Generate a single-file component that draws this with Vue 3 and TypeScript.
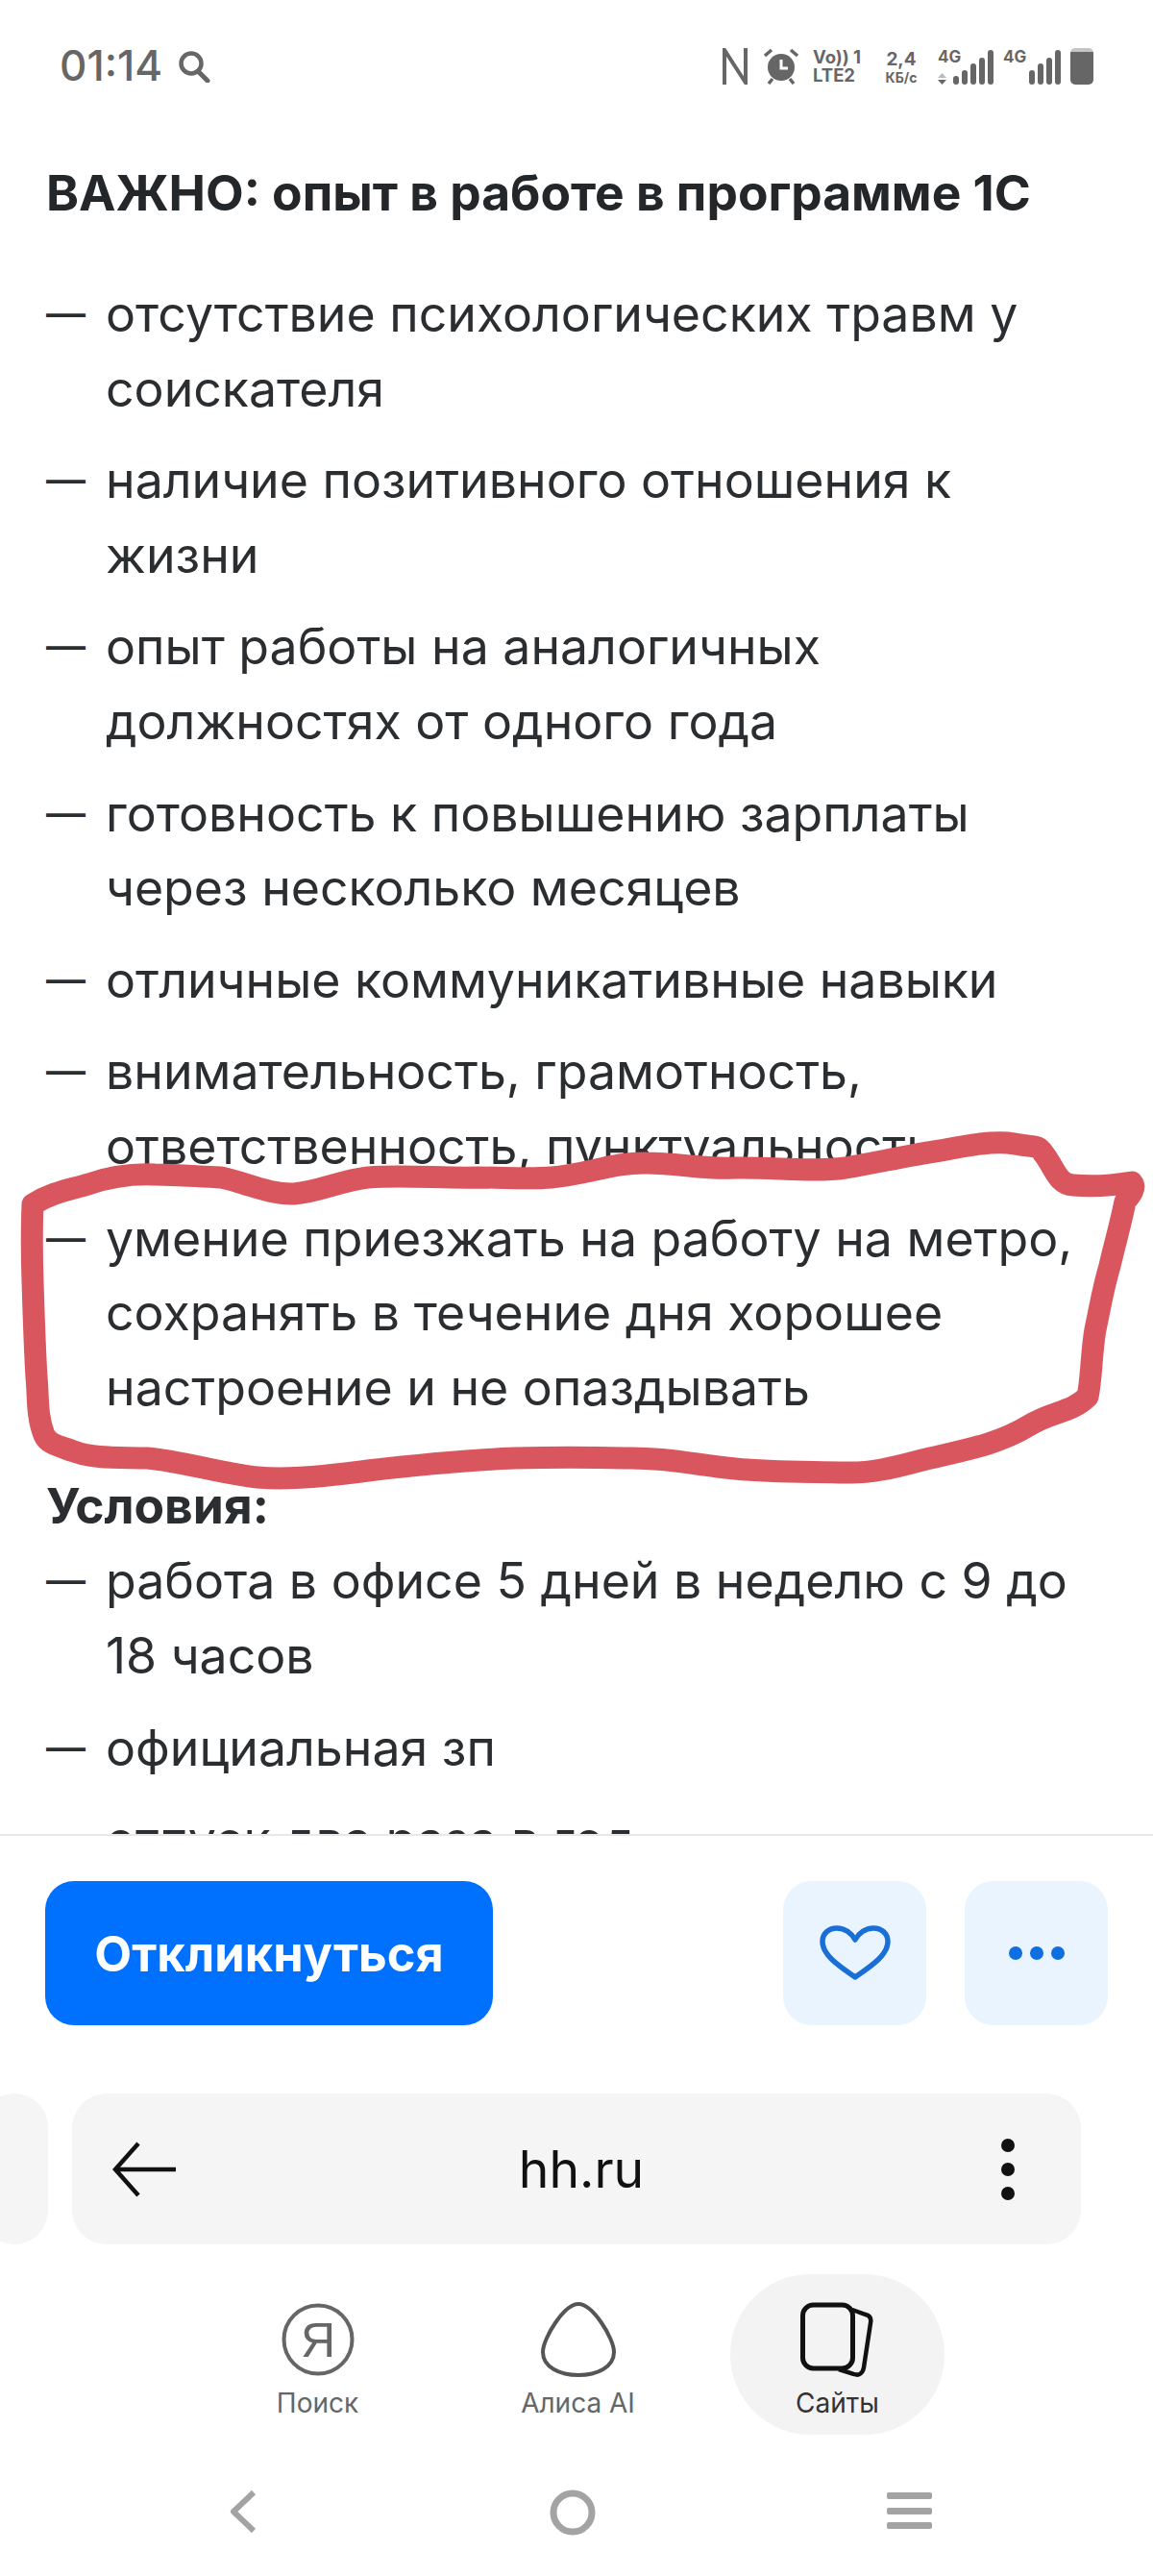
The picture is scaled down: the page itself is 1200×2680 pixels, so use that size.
<script setup lang="ts">
const requirements: string[] = [
  'отсутствие психологических травм у соискателя',
  'наличие позитивного отношения к жизни',
  'опыт работы на аналогичных должностях от одного года',
  'готовность к повышению зарплаты через несколько месяцев',
  'отличные коммуникативные навыки',
  'внимательность, грамотность, ответственность, пунктуальность',
  'умение приезжать на работу на метро, сохранять в течение дня хорошее настроение и не опаздывать',
]
const conditions: string[] = [
  'работа в офисе 5 дней в неделю с 9 до 18 часов',
  'официальная зп',
  'отпуск два раза в год',
]
const bars: number[] = [9, 15, 22, 28, 36]
</script>

<template>
  <div class="phone">
    <div class="status">
      <div class="status-left">
        <span class="time">01:14</span>
        <svg class="search-ic" width="34" height="34" viewBox="0 0 34 34">
          <circle cx="14" cy="14" r="10.5" fill="none" stroke="#666" stroke-width="4.5" />
          <path d="M21 22 L31 32" stroke="#666" stroke-width="5" stroke-linecap="round" />
        </svg>
      </div>
      <div class="status-right">
        <svg width="26" height="38" viewBox="0 0 26 38">
          <path d="M2 38 V2 L24 36 V0" fill="none" stroke="#666" stroke-width="4" />
        </svg>
        <svg class="alarm" width="38" height="38" viewBox="0 0 38 38">
          <circle cx="19" cy="20" r="14" fill="#666" />
          <path d="M19 12 V21 H26" fill="none" stroke="#fff" stroke-width="3" />
          <path d="M2 8 L9 2 M36 8 L29 2 M6 37 L10 32 M32 37 L28 32" stroke="#666" stroke-width="3.5" />
        </svg>
        <div class="stack volte">
          <span>Vo)) 1</span>
          <span>LTE2</span>
        </div>
        <div class="stack speed">
          <span class="speed-num">2,4</span>
          <span class="speed-unit">КБ/с</span>
        </div>
        <div class="signal first">
          <span class="net">4G</span>
          <svg class="updown" width="9" height="12" viewBox="0 0 9 12">
            <path d="M4.5 0 L9 5 H0 Z" fill="#bbb" />
            <path d="M4.5 12 L9 7 H0 Z" fill="#666" />
          </svg>
          <div class="bars">
            <i v-for="h in bars" :key="h" :style="{ height: h + 'px' }"></i>
          </div>
        </div>
        <div class="signal second">
          <span class="net">4G</span>
          <div class="bars">
            <i v-for="h in bars.slice(1)" :key="h" :style="{ height: h + 'px' }"></i>
          </div>
        </div>
        <div class="battery"></div>
      </div>
    </div>

    <div class="content">
      <h2 class="title">ВАЖНО: опыт в работе в программе 1С</h2>
      <ul class="list">
        <li v-for="item in requirements" :key="item"><span class="dash">—</span><span>{{ item }}</span></li>
      </ul>
      <div class="subhead">Условия:</div>
      <ul class="list">
        <li v-for="item in conditions" :key="item"><span class="dash">—</span><span>{{ item }}</span></li>
      </ul>
    </div>

    <div class="actions">
      <button class="respond">Откликнуться</button>
      <div class="action-icons">
        <button class="soft">
          <svg width="76" height="58" viewBox="0 0 76 58">
            <path d="M38 54 C24 44 4 32 4 17 C4 8 11 3 19 3 C27 3 34 8 38 15 C42 8 49 3 57 3 C65 3 72 8 72 17 C72 32 52 44 38 54 Z" fill="none" stroke="#1a6fd6" stroke-width="5.5" stroke-linejoin="round" />
          </svg>
        </button>
        <button class="soft">
          <svg width="58" height="16" viewBox="0 0 58 16">
            <circle cx="7" cy="8" r="7" fill="#0f6fe0" />
            <circle cx="29" cy="8" r="7" fill="#0f6fe0" />
            <circle cx="51" cy="8" r="7" fill="#0f6fe0" />
          </svg>
        </button>
      </div>
    </div>

    <div class="browser">
      <div class="tab-peek"></div>
      <div class="address">
        <svg width="68" height="58" viewBox="0 0 68 58">
          <path d="M27 2 L3 29 L27 56 M3 29 H66" fill="none" stroke="#111" stroke-width="4.5" />
        </svg>
        <span class="host">hh.ru</span>
        <svg width="16" height="66" viewBox="0 0 16 66">
          <circle cx="8" cy="8" r="7" fill="#111" />
          <circle cx="8" cy="33" r="7" fill="#111" />
          <circle cx="8" cy="58" r="7" fill="#111" />
        </svg>
      </div>
    </div>

    <div class="tabs">
      <div class="tab">
        <svg width="78" height="78" viewBox="0 0 78 78">
          <circle cx="39" cy="39" r="35.5" fill="none" stroke="#666" stroke-width="4" />
          <text x="39" y="57" text-anchor="middle" class="ya">Я</text>
        </svg>
        <span>Поиск</span>
      </div>
      <div class="tab">
        <svg width="78" height="78" viewBox="0 0 78 78">
          <path d="M39 2 C54 2 76 38 76 52 C76 68 58 76 39 76 C20 76 2 68 2 52 C2 38 24 2 39 2 Z" fill="none" stroke="#555" stroke-width="4" />
        </svg>
        <span>Алиса AI</span>
      </div>
      <div class="tab active">
        <svg width="78" height="78" viewBox="0 0 78 78">
          <path d="M54 8 L68 13 C72 14 74 17 73 22 L66 68 C65 74 61 77 56 75 L40 70" fill="none" stroke="#111" stroke-width="4.5" />
          <rect x="2.5" y="3" width="52" height="66" rx="11" fill="#f3f3f3" stroke="#111" stroke-width="5" />
        </svg>
        <span>Сайты</span>
      </div>
    </div>

    <div class="sysnav">
      <svg width="30" height="46" viewBox="0 0 30 46">
        <path d="M26 3 L5 23 L26 43" fill="none" stroke="#a3a3a3" stroke-width="6" stroke-linejoin="round" />
      </svg>
      <svg width="48" height="48" viewBox="0 0 48 48">
        <circle cx="24" cy="24" r="20" fill="none" stroke="#a3a3a3" stroke-width="7" />
      </svg>
      <div class="menu"><i></i><i></i><i></i></div>
    </div>

    <!-- обводка от руки поверх скриншота -->
    <svg class="scribble" width="1200" height="2680" viewBox="0 0 1200 2680">
      <path d="M34 1253 C55 1240 72 1238 92 1232 C115 1224 138 1221 161 1222 C185 1222 205 1224 230 1225 C255 1230 280 1243 306 1242 C332 1240 355 1228 383 1225 C420 1222 460 1226 497 1225 C525 1225 550 1227 574 1225 C610 1222 640 1209 673 1210 C705 1210 735 1217 765 1215 C805 1214 845 1220 880 1215 C915 1209 945 1202 979 1197 C1005 1192 1035 1186 1056 1190 C1075 1194 1080 1190 1086 1200 C1098 1215 1100 1232 1117 1233 C1140 1235 1160 1233 1178 1230 C1183 1236 1176 1244 1171 1250 C1166 1275 1160 1295 1155 1317 C1148 1340 1145 1360 1140 1383 C1136 1405 1136 1435 1132 1453 C1115 1470 1095 1468 1071 1483 C1035 1505 995 1510 956 1520 C930 1527 905 1533 880 1532 C840 1531 805 1532 765 1528 C725 1524 690 1516 650 1517 C612 1516 575 1516 536 1517 C485 1519 435 1524 383 1530 C345 1535 305 1540 268 1537 C228 1533 190 1520 153 1517 C125 1516 98 1518 77 1510 C60 1504 50 1502 46 1493 C38 1473 40 1453 38 1433 C36 1400 35 1366 34 1333 C33 1305 33 1278 34 1253 Z" fill="none" stroke="#d9565e" stroke-width="23" stroke-linejoin="round" />
    </svg>
  </div>
</template>

<style scoped>
.phone {
  position: relative;
  width: 1200px;
  height: 2680px;
  display: flex;
  flex-direction: column;
  background: #fff;
  overflow: hidden;
  font-family: Inter, "Liberation Sans", sans-serif;
  color: #2b2e30;
}
.status {
  flex: none;
  height: 96px;
  padding: 46px 62px 0 62px;
  box-sizing: border-box;
  display: flex;
  justify-content: space-between;
  align-items: flex-start;
  color: #666;
}
.status-left { display: flex; align-items: center; gap: 16px; }
.time { font-size: 44px; line-height: 44px; font-weight: 500; }
.search-ic { margin-top: 2px; }
.status-right {
  display: flex;
  align-items: flex-start;
  margin-top: 4px;
  position: relative;
}
.alarm { margin-left: 16px; }
.stack {
  display: flex;
  flex-direction: column;
  font-weight: 700;
  white-space: nowrap;
}
.volte { margin-left: 14px; width: 48px; font-size: 18.5px; line-height: 19px; }
.speed { margin-left: 20px; width: 48px; text-align: center; }
.speed-num { font-size: 19px; line-height: 23px; }
.speed-unit { font-size: 14px; line-height: 15px; }
.signal { position: relative; height: 38px; }
.first { margin-left: 12px; width: 60px; }
.second { margin-left: 10px; width: 60px; }
.net { position: absolute; left: 2px; top: 0; font-size: 17px; line-height: 18px; font-weight: 700; }
.second .net { left: 0; }
.updown { position: absolute; left: 2px; bottom: 0; }
.bars {
  position: absolute;
  right: 0;
  bottom: 0;
  display: flex;
  align-items: flex-end;
  gap: 3px;
}
.bars i {
  width: 6px;
  background: #666;
  border-radius: 3px;
}
.battery {
  margin-left: 10px;
  width: 24px;
  height: 38px;
  background: linear-gradient(#c4c4c4 0 4px, #666 4px);
  border-radius: 5px;
}
.content {
  flex: 1;
  min-height: 0;
  overflow: hidden;
  padding: 74px 48px 0 48px;
}
.title {
  margin: 0 0 58px;
  font-size: 51.5px;
  line-height: 60px;
  font-weight: 700;
  color: #23272a;
}
.list {
  list-style: none;
  margin: 0;
  padding: 0;
  display: flex;
  flex-direction: column;
  gap: 18px;
  font-size: 51.8px;
  line-height: 77.6px;
}
.list li { display: flex; }
.dash { flex: none; width: 62px; font-size: 41px; font-weight: 500; }
.subhead {
  margin-top: 46px;
  margin-bottom: 1px;
  font-size: 51.5px;
  line-height: 77px;
  font-weight: 700;
}
.actions {
  flex: none;
  height: 270px;
  box-sizing: border-box;
  border-top: 2px solid #e8e8e8;
  padding: 47px 47px 0 47px;
  display: flex;
  justify-content: space-between;
  align-items: flex-start;
  background: #fff;
}
.respond {
  width: 466px;
  height: 150px;
  border: none;
  border-radius: 30px;
  background: #0070ff;
  color: #fff;
  font: 700 50.5px Inter, "Liberation Sans", sans-serif;
}
.action-icons { display: flex; gap: 40px; }
.soft {
  width: 149px;
  height: 150px;
  border: none;
  border-radius: 30px;
  background: #eaf4ff;
  display: flex;
  align-items: center;
  justify-content: center;
  padding: 0;
}
.browser {
  flex: none;
  height: 157px;
  margin-left: -20px;
  display: flex;
  gap: 25px;
  width: 1145px;
}
.tab-peek {
  width: 70px;
  background: #f5f5f5;
  border-radius: 36px;
}
.address {
  flex: 1;
  background: #f5f5f5;
  border-radius: 36px;
  padding: 0 68px 0 42px;
  display: flex;
  align-items: center;
  justify-content: space-between;
}
.host { font-size: 53.5px; color: #111; margin-right: 16px; }
.tabs {
  flex: none;
  height: 167px;
  margin-top: 31px;
  display: flex;
  padding-left: 220px;
  box-sizing: border-box;
}
.tab {
  width: 223px;
  display: flex;
  flex-direction: column;
  align-items: center;
  padding-top: 29px;
  box-sizing: border-box;
  gap: 9px;
  font-size: 28px;
  line-height: 36px;
  color: #666;
  margin-right: 47px;
}
.tab:nth-child(1) { width: 221px; margin-right: 49px; }
.tab.active {
  color: #333;
  background: #f3f3f3;
  border-radius: 84px;
}
.ya { font: 400 50px "Liberation Sans", sans-serif; fill: #666; }
.sysnav {
  flex: none;
  height: 147px;
  padding: 57px 230px 0 238px;
  box-sizing: border-box;
  display: flex;
  justify-content: space-between;
  align-items: flex-start;
}
.menu {
  width: 47px;
  height: 38px;
  margin-top: 3px;
  display: flex;
  flex-direction: column;
  justify-content: space-between;
}
.menu i {
  display: block;
  height: 7px;
  background: #a3a3a3;
  border-radius: 2px;
}
.scribble {
  position: absolute;
  left: 0;
  top: 0;
  pointer-events: none;
}
</style>
